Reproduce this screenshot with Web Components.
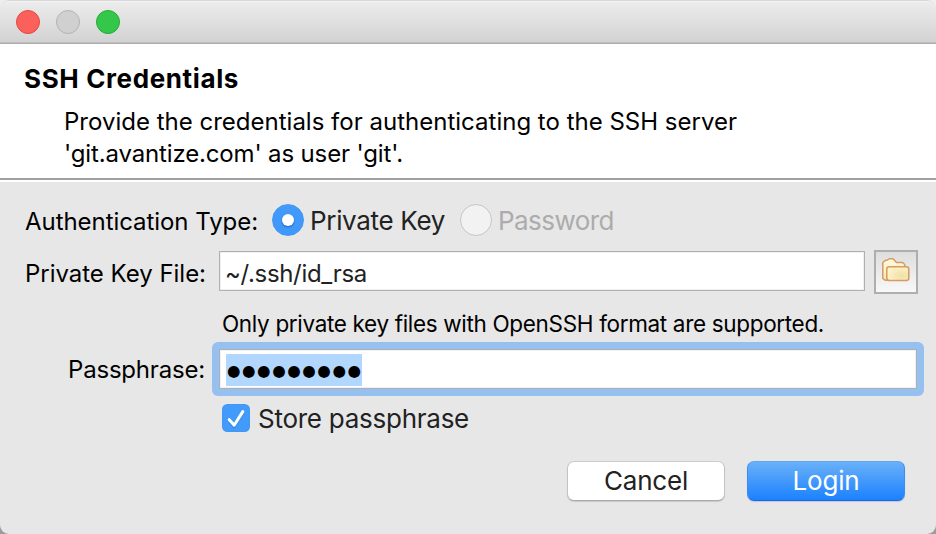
<!DOCTYPE html>
<html lang="en">
<head>
<meta charset="utf-8">
<title>SSH Credentials</title>
<style>
html,body{margin:0;height:100%;background:linear-gradient(#eee 50%,#9c9c9c 50%);overflow:hidden}
body{font-family:Inter,"Liberation Sans",sans-serif;color:#000}
</style>
</head>
<body>
<ssh-dialog></ssh-dialog>
<script>
function define(name, html, ready) {
  const t = document.createElement('template');
  t.innerHTML = html;
  customElements.define(name, class extends HTMLElement {
    constructor() {
      super();
      this.attachShadow({mode: 'open'}).append(t.content.cloneNode(true));
    }
    connectedCallback() { if (ready) ready(this, this.shadowRoot); }
  });
}

// Single line of text whose tracking is spread to a given advance width.
define('fit-text', `<style>:host{display:block;white-space:pre;line-height:32px;font-size:24px;flex:none}span{display:inline-block}</style><span><slot></slot></span>`,
  (el, root) => {
    const want = +el.getAttribute('w'), s = root.querySelector('span');
    if (el.hasAttribute('size')) el.style.fontSize = el.getAttribute('size') + 'px';
    el.style.width = want + 'px';
    const n = [...el.textContent].length;
    s.style.letterSpacing = (want - s.getBoundingClientRect().width) / n + 'px';
  });

define('title-bar', `<style>
:host{display:flex;box-sizing:border-box;height:44px;padding:10px 16px;gap:16px;border-radius:9px 9px 0 0;background:linear-gradient(#ededed,#d2d2d2);border-bottom:1px solid #acacac;box-shadow:inset 0 1px #d8d8d8,inset 0 2px #f4f4f4,inset 0 -1px #c0c0c0}
i{box-sizing:border-box;width:24px;height:24px;border-radius:50%;border:1px solid}
.r{background:#fc605b;border-color:#e14942}.g{background:#d0d0d0;border-color:#b4b4b4}.n{background:#34c84a;border-color:#27a935}
</style><i class="r"></i><i class="g"></i><i class="n"></i>`);

define('dialog-banner', `<style>
:host{display:block;box-sizing:border-box;height:138px;background:#fff;padding:19px 24px 0;border-bottom:2px solid #fff;box-shadow:inset 0 -2px #a0a0a0}
::slotted([slot=title]){font-weight:700}
.d{padding:11px 0 0 40px}
</style><slot name="title"></slot><div class="d"><slot></slot></div>`);

define('radio-button', `<style>
:host{display:flex;align-items:center;gap:6px;color:#222}
:host([disabled]){color:#acacac}
i{box-sizing:border-box;width:32px;height:32px;border-radius:50%;display:grid;place-items:center;background:#f2f2f2;border:1px solid #c6c6c6}
:host([checked]) i{background:linear-gradient(#429bfa,#3f98fb);border-color:#3f97f6}
:host([checked]) i::after{content:"";width:12px;height:12px;border-radius:50%;background:#fff;box-shadow:0 1px 2px #1c63b8}
</style><i></i><slot></slot>`);

define('check-box', `<style>
:host{display:flex;align-items:center;gap:8px;color:#222}
svg{display:block}
</style><svg width="28" height="28" viewBox="0 0 28 28"><rect width="28" height="28" rx="5.5" fill="#3f97f4"/><rect x=".8" y=".8" width="26.4" height="26.4" rx="5" fill="#429bfa"/><path d="M7.2 16.2 12.3 21.7 20.8 8" transform="translate(0 1)" fill="none" stroke="#2573c9" stroke-opacity=".5" stroke-width="3" stroke-linecap="round" stroke-linejoin="round"/><path d="M7.2 15.7 12.2 21.2 20.8 7.6" fill="none" stroke="#fff" stroke-width="3" stroke-linecap="round" stroke-linejoin="round"/></svg><slot></slot>`);

define('text-field', `<style>
:host{display:flex;align-items:center;box-sizing:border-box;height:40px;padding:0 6px;background:#fff;border:1px solid #b0b0b0;box-shadow:inset 0 0 0 1px #f1f1f1;color:#222;flex:none}
</style><slot></slot>`);

define('focus-ring', `<style>:host{display:flex;box-sizing:border-box;width:712px;height:54px;padding:7px;background:#96c0f0;border-radius:6px}
::slotted(*){flex:1!important}</style><slot></slot>`);

define('secret-text', `<style>:host{display:block;box-sizing:border-box;width:136px;height:32px;margin-top:2px;padding:1px 0 0 1px;background:#b2d7fe;color:#000;font-family:"DejaVu Sans",sans-serif}</style><slot></slot>`);

define('folder-button', `<style>
:host{display:grid;box-sizing:border-box;width:44px;height:44px;border:2px solid #adafae;background:linear-gradient(#dedede,#f8f8f8);flex:none}
svg{display:block}
</style><svg width="40" height="40" viewBox="0 0 40 40"><defs>
<linearGradient id="a" x2="0" y2="1"><stop stop-color="#fffbe4"/><stop offset="1" stop-color="#fbe6b2"/></linearGradient>
<radialGradient id="b" cx=".68" cy=".66" r=".75"><stop stop-color="#ece2a4"/><stop offset=".55" stop-color="#faeabc"/><stop offset="1" stop-color="#fff6cc"/></radialGradient></defs>
<path d="M9 28.2 6.8 26.5V10.5L9.5 8.3H11L13.5 6.7H17L20.5 10.5H26.5L28.7 12.5V28.2Z" fill="url(#a)" stroke="#d59b60" stroke-width="1.5"/>
<rect x="10.8" y="14.7" width="22" height="13.7" rx="2.4" fill="url(#b)" stroke="#d59b60" stroke-width="1.5"/></svg>`);

define('push-button', `<style>
:host{display:flex;box-sizing:border-box;width:158px;height:40px;align-items:center;justify-content:center;border-radius:7px;background:#fff;color:#222;border:1px solid;border-color:#cdcdcd #c4c4c4 #aaa;box-shadow:0 1px 1px #0002}
:host([primary]){background:linear-gradient(#6bb2f9,#1a80fe);background-origin:border-box;color:#fff;border-color:#5ea6f0 #3b8df5 #1467f5}
</style><slot></slot>`);

define('form-row', `<style>:host{display:flex;box-sizing:border-box}</style><slot></slot>`);

define('ssh-dialog', `<style>
:host{display:flex;flex-direction:column;width:936px;height:534px;background:#e7e7e7;border-radius:9px;overflow:hidden}
main{display:flex;flex-direction:column;padding-top:22px}
.auth{height:47px;padding-left:25px}
.auth radio-button{height:32px}
.auth radio-button fit-text{padding-top:2px}
.file{height:61px;padding-left:25px}
.note{height:30px;padding-left:222px}
.pass{height:60px;padding-left:68px}
.store{padding-left:222px}
.store fit-text{padding-top:1px;margin-bottom:-1px}
.actions{padding:27px 31px 0 0;gap:22px;justify-content:flex-end}
</style>
<title-bar></title-bar>
<dialog-banner>
<fit-text slot="title" size="26" w="215">SSH Credentials</fit-text>
<fit-text w="673">Provide the credentials for authenticating to the SSH server</fit-text>
<fit-text w="339">'git.avantize.com' as user 'git'.</fit-text>
</dialog-banner>
<main>
<form-row class="auth">
<fit-text w="233" style="margin-top:2px">Authentication Type:</fit-text>
<radio-button checked style="margin-left:14px"><fit-text size="26" w="135">Private Key</fit-text></radio-button>
<radio-button disabled style="margin-left:15px"><fit-text size="26" w="116">Password</fit-text></radio-button>
</form-row>
<form-row class="file">
<fit-text w="181" style="margin-top:7px">Private Key File:</fit-text>
<text-field style="margin-left:13px;width:646px"><fit-text w="142" style="padding-top:6px;margin-left:-1px">~/.ssh/id_rsa</fit-text></text-field>
<folder-button style="margin:-1px 0 0 9px"></folder-button>
</form-row>
<form-row class="note"><fit-text size="22.5" w="602" style="margin-top:-4px">Only private key files with OpenSSH format are supported.</fit-text></form-row>
<form-row class="pass">
<fit-text w="137" style="margin-top:12px">Passphrase:</fit-text>
<focus-ring style="margin-left:7px"><text-field><secret-text><fit-text w="135.5" size="15.5">●●●●●●●●●</fit-text></secret-text></text-field></focus-ring>
</form-row>
<form-row class="store"><check-box><fit-text size="26" w="211">Store passphrase</fit-text></check-box></form-row>
<form-row class="actions">
<push-button><fit-text size="26" w="84">Cancel</fit-text></push-button>
<push-button primary><fit-text size="26" w="67">Login</fit-text></push-button>
</form-row>
</main>`);
</script>
</body>
</html>
